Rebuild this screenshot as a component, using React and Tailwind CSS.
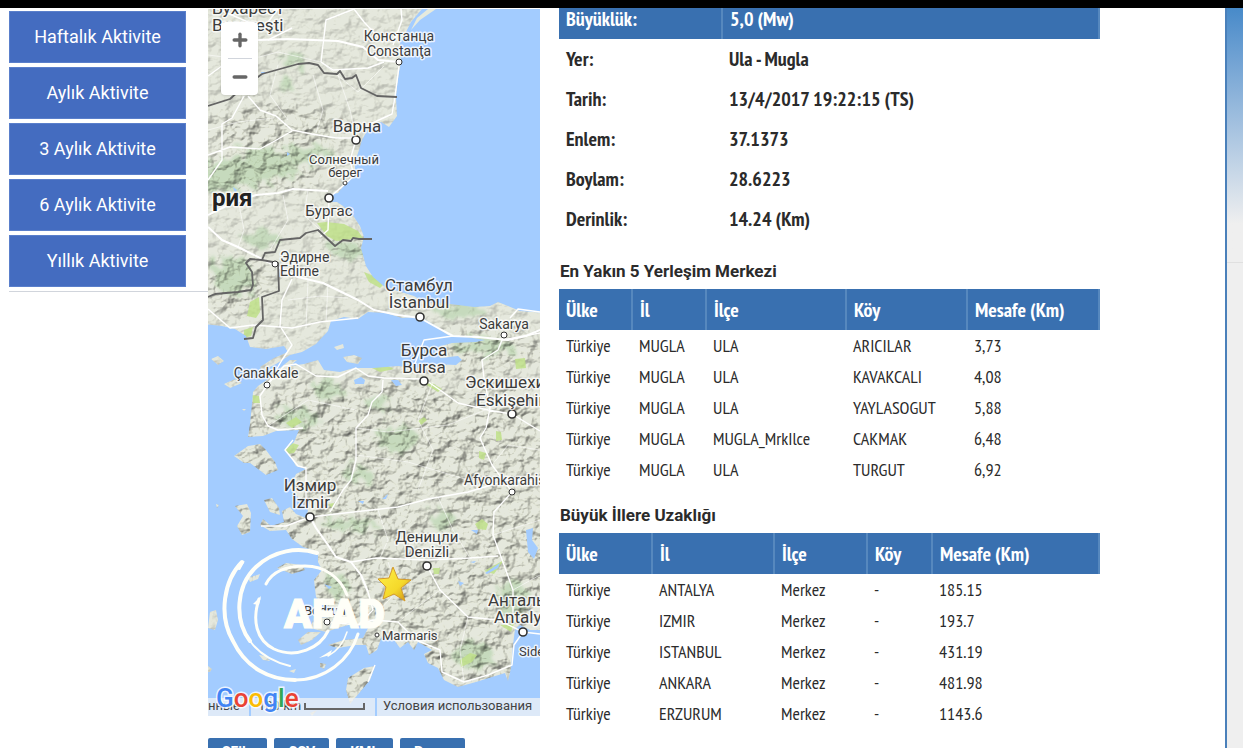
import { Minus, Plus } from 'lucide-react';

const periods = ['Haftalık Aktivite', 'Aylık Aktivite', '3 Aylık Aktivite', '6 Aylık Aktivite', 'Yıllık Aktivite'];

const details = [
    ['Yer:', 'Ula - Mugla'],
    ['Tarih:', '13/4/2017 19:22:15 (TS)'],
    ['Enlem:', '37.1373'],
    ['Boylam:', '28.6223'],
    ['Derinlik:', '14.24 (Km)'],
];

const columns = ['Ülke', 'İl', 'İlçe', 'Köy', 'Mesafe (Km)'];

const settlements = [
    ['Türkiye', 'MUGLA', 'ULA', 'ARICILAR', '3,73'],
    ['Türkiye', 'MUGLA', 'ULA', 'KAVAKCALI', '4,08'],
    ['Türkiye', 'MUGLA', 'ULA', 'YAYLASOGUT', '5,88'],
    ['Türkiye', 'MUGLA', 'MUGLA_MrkIlce', 'CAKMAK', '6,48'],
    ['Türkiye', 'MUGLA', 'ULA', 'TURGUT', '6,92'],
];

const cities = [
    ['Türkiye', 'ANTALYA', 'Merkez', '-', '185.15'],
    ['Türkiye', 'IZMIR', 'Merkez', '-', '193.7'],
    ['Türkiye', 'ISTANBUL', 'Merkez', '-', '431.19'],
    ['Türkiye', 'ANKARA', 'Merkez', '-', '481.98'],
    ['Türkiye', 'ERZURUM', 'Merkez', '-', '1143.6'],
];

const downloads = ['SFile', 'CSV', 'KML', 'Rapor'];

// x, y (baseline), size, anchor, text
const labels = [
    [4, 14, 17, 'start', 'Бухарест'],
    [4, 31, 17, 'start', 'Bucureşti'],
    [191, 41, 14, 'middle', 'Констанца'],
    [191, 56, 14, 'middle', 'Constanţa'],
    [149, 132, 17, 'middle', 'Варна'],
    [136, 164, 13, 'middle', 'Солнечный'],
    [137, 177, 13, 'middle', 'берег'],
    [121, 216, 15, 'middle', 'Бургас'],
    [72, 262, 14, 'start', 'Эдирне'],
    [72, 276, 14, 'start', 'Edirne'],
    [211, 291, 17, 'middle', 'Стамбул'],
    [211, 308, 17, 'middle', 'İstanbul'],
    [296, 329, 14, 'middle', 'Sakarya'],
    [216, 356, 17, 'middle', 'Бурса'],
    [216, 373, 17, 'middle', 'Bursa'],
    [58, 378, 14, 'middle', 'Çanakkale'],
    [257, 388, 17, 'start', 'Эскишехир'],
    [268, 406, 17, 'start', 'Eskişehir'],
    [256, 485, 14, 'start', 'Afyonkarahisar'],
    [102, 491, 17, 'middle', 'Измир'],
    [103, 508, 17, 'middle', 'İzmir'],
    [219, 542, 15, 'middle', 'Деницли'],
    [219, 557, 15, 'middle', 'Denizli'],
    [280, 606, 17, 'start', 'Анталья'],
    [286, 623, 17, 'start', 'Antalya'],
    [96, 615, 13, 'start', 'Bodrum'],
    [174, 640, 13, 'start', 'Marmaris'],
    [311, 656, 13, 'start', 'Side'],
];

// x, y, radius
const cityDots = [
    [191, 62, 3], [148, 140, 4], [137, 183, 2], [121, 198, 4], [67, 264, 3], [212, 317, 4], [296, 335, 3],
    [216, 381, 4], [59, 385, 3], [304, 414, 4], [304, 492, 3], [102, 517, 4], [219, 566, 4], [315, 632, 4],
    [119, 622, 3], [169, 635, 2],
];

// Centre and radii of the hilly and of the wooded areas
const hills = [
    [70, 130, 70, 25], [45, 172, 75, 20], [150, 245, 35, 12], [30, 285, 35, 30], [270, 350, 70, 22],
    [105, 415, 50, 35], [90, 470, 50, 50], [190, 440, 80, 60], [150, 520, 75, 30], [280, 440, 60, 60],
    [290, 530, 60, 60], [160, 585, 70, 40], [240, 620, 60, 60], [25, 460, 40, 70], [150, 670, 40, 40],
    [280, 660, 40, 30], [310, 590, 40, 40], [70, 540, 60, 60],
];
const woods = [
    [40, 170, 50, 13], [15, 180, 30, 12], [100, 155, 30, 9], [85, 60, 12, 8], [78, 85, 8, 7], [25, 275, 20, 20],
    [140, 250, 18, 9], [250, 310, 25, 9], [275, 347, 32, 8], [90, 418, 22, 9], [190, 440, 22, 13], [170, 402, 14, 7],
    [120, 390, 15, 9], [140, 525, 30, 6], [130, 585, 12, 12], [265, 655, 20, 14], [235, 520, 12, 10],
    [55, 240, 18, 8], [305, 600, 15, 20], [150, 475, 14, 9], [52, 155, 20, 8],
];

const mainland = `M-5 0 L214 0 L214 9 L203 22 L198 32 L192 42 L193 62 L191 72 L189 86 L188 97 L189 116 L181 127 L173 122
  L160 129 L154 140 L151 150 L147 162 L147 176 L141 180 L134 188 L130 193 L120 195 L122 202 L129 202 L135 206 L144 214
  L152 226 L156 237 L153 248 L158 266 L165 277 L178 288 L190 291 L206 296 L216 302 L242 304 L266 307 L282 306 L290 302
  L300 306 L312 311 L337 313 L337 630 L322 630 L312 625 L307 629 L305 645 L303 668 L300 681 L297 673 L284 677 L268 682
  L250 687 L236 680 L230 668 L220 663 L216 654 L224 650 L210 642 L206 650 L200 642 L192 648 L186 640 L174 636 L169 650
  L161 655 L158 645 L148 645 L130 648 L120 645 L136 640 L155 638 L160 628 L144 624 L130 628 L118 632 L102 628 L106 618
  L122 617 L132 609 L118 606 L108 597 L106 580 L114 570 L110 562 L110 552 L95 547 L84 539 L78 530 L62 531 L52 525
  L55 519 L63 526 L76 522 L74 511 L82 507 L88 514 L98 518 L100 510 L92 500 L82 488 L88 474 L98 469 L88 466 L82 455
  L77 450 L86 442 L91 430 L68 431 L55 436 L40 437 L42 424 L44 404 L45 392 L50 386 L60 379 L72 368 L82 360 L89 360
  L82 366 L96 364 L110 360 L116 370 L132 372 L146 368 L166 368 L190 366 L208 368 L228 364 L248 365 L254 360
  L250 356 L232 358 L230 347 L244 343 L268 342 L277 340 L258 337 L240 335 L234 331 L226 325 L218 320 L207 317 L194 318
  L178 313 L160 312 L150 319 L136 317 L123 321 L120 331 L108 344 L94 352 L82 355 L68 364 L54 371 L52 367 L66 358
  L80 352 L76 346 L58 349 L42 347 L38 336 L27 329 L14 326 L-5 324 Z`;

const islands = `M3 359 L10 356 L16 361 L10 365 Z M16 384 L27 379 L34 383 L22 388 Z M126 347 L135 344 L136 348 L129 350 Z
  M135 357 L146 355 L154 358 L150 364 L139 362 Z M26 456 L40 446 L52 444 L58 450 L67 462 L70 470 L58 475 L42 463 L36 463 Z
  M27 506 L39 504 L43 513 L42 532 L34 535 L29 526 L35 516 Z M56 500 L64 498 L71 508 L72 515 L62 512 Z
  M69 568 L78 563 L94 565 L97 570 L84 574 Z M40 578 L52 574 L50 579 L42 582 Z M2 612 L8 610 L10 620 L7 630 L0 628 Z
  M90 640 L100 632 L113 632 L104 640 L93 645 Z M138 690 L140 678 L156 668 L167 666 L162 680 L152 692 L142 704 Z
  M51 655 L58 656 L62 661 L55 660 Z M112 663 L118 664 L116 669 L112 667 Z M8 504 L11 505 L9 508 Z M34 409 L38 409 L36 411 Z
  M81 671 L88 669 L86 673 Z M0 666 L4 669 L2 672 L0 672 Z M102 713 L109 710 L104 716 Z`;

const lakes = `M146 380 L153 377 L157 380 L156 384 L147 384 Z M183 380 L190 380 L194 385 L188 386 Z M318 530 L325 528 L324 540
  L330 548 L326 559 L320 552 Z M277 573 L292 563 L290 568 L279 574 Z M116 584 L124 587 L121 589 Z M79 152 L82 154 L79 156 Z
  M263 530 L270 530 L269 534 Z M150 501 L156 501 L155 504 Z M174 499 L180 494 L178 499 Z M250 581 L256 583 L252 586 Z
  M25 187 L29 190 L27 193 Z M262 562 L268 561 L266 563 Z M53 72 L58 72 L54 75 Z`;

const parks = `M109 223 L118 222 L136 224 L150 231 L155 238 L128 241 L119 236 Z M156 272 L166 276 L175 285 L172 288 L161 282 Z
  M42 302 L51 297 L52 312 L48 318 L39 316 Z M36 330 L45 327 L43 336 L36 338 Z M160 366 L178 365 L186 369 L172 372 Z
  M44 395 L51 396 L52 403 L45 403 Z M78 423 L88 417 L94 422 L84 428 Z M78 448 L84 443 L91 445 L86 453 L78 454 Z
  M217 384 L224 383 L234 389 L230 392 Z M307 359 L317 358 L318 368 L308 369 Z M288 431 L293 432 L294 440 L288 441 Z
  M271 451 L278 453 L276 460 L271 458 Z M267 524 L274 519 L280 524 L278 530 L270 529 Z M98 573 L110 572 L108 576 L98 577 Z
  M252 660 L262 653 L269 655 L264 662 L253 667 Z M225 568 L232 568 L231 574 L226 574 Z M292 625 L306 624 L303 632 Z
  M210 421 L216 417 L219 420 L213 425 Z M276 571 L296 560 L286 574 Z M120 504 L126 503 L124 508 Z`;

const borders = `M0 106 L22 99 L32 90 L54 74 L90 64 L101 63 L110 65 L116 73 L129 74 L132 71 L137 79 L144 78 L148 75 L153 88
  L169 96 L189 97 M164 239 L151 239 L145 238 L143 241 L135 240 L127 246 L110 230 L98 233 L92 238 L72 240 L67 252
  L57 253 L54 260 L70 263 L71 291 L54 297 L55 320 L48 327 L45 338 L36 339
  M54 260 L42 259 L38 263 L44 272 L45 285 L43 290 L30 292 L18 293 L7 294 L0 297`;

const motorways = `M0 215 L20 205 L48 195 L70 193 L85 189 L120 191 M0 227 L14 240 L30 247 L54 259 L72 268 L90 277 L115 283
  L150 300 L166 310 L190 315 L212 318 L230 328 L245 336 L270 337 L300 340 L318 336 L332 330
  M50 40 L80 39 L130 41 L155 47 L170 60 L191 62 M102 517 L108 528 L120 545 L128 557 L143 562 L153 575 L160 592`;

const roads = `M40 96 L52 110 L68 116 L84 130 L104 134 L128 138 L148 138 M0 155 L22 147 L52 149 L65 142 L84 131 M148 140
  L142 160 L146 176 L137 184 L121 198 L120 230 L112 237 M191 66 L187 97 L184 114 L160 125 M146 9 L118 20 L113 62
  M70 9 L60 22 L45 32 M84 28 L60 40 M113 62 L125 70 L160 68 L176 62 M146 9 L156 22 L175 42 M193 9 L194 20 L185 45
  M10 9 L40 22 M36 50 L0 76 M36 96 L24 118 L14 124 L14 160 L0 180 M84 279 L74 300 L72 326 L84 345 L74 360 L60 384
  L52 396 L54 415 L60 426 L70 430 L95 428 M0 309 L22 328 L45 325 L84 328 L112 322 L150 318 M60 384 L76 366 L88 364
  L108 376 L130 377 L148 368 L160 376 L176 378 L216 379 L232 390 L250 403 L280 410 L304 414 L332 431
  M175 380 L174 392 L164 402 L160 415 L148 428 L148 460 L143 480 L135 490 L122 512 M102 517 L128 514 L190 507
  L220 499 L260 492 L300 480 L332 482 M53 526 L78 526 L102 517 M85 440 L77 450 L90 466 L98 468 L98 500
  M143 562 L168 558 L219 560 L262 558 L290 556 M219 566 L232 590 L260 617 L290 620 L315 632 L332 634
  M296 335 L290 350 L274 360 L276 378 L282 408 L278 428 L272 438 L284 465 L304 492 M304 492 L286 512 L285 535 L296 565
  L305 590 L305 620 M315 632 L306 645 L304 665 L280 675 L256 682 L234 672 L232 650 L208 640 L190 622 L165 620 L150 625
  M160 592 L165 610 L150 625 L119 622 M206 366 L216 340 L245 336 M294 340 L332 333 M167 665 L160 682
  M332 312 L310 309 L302 318`;

const minorRoads = `M0 55 L40 60 L70 52 L113 62 L150 92 L176 66 M70 65 L62 95 L80 120 M105 75 L115 110 L108 133 M130 75
  L142 110 L148 138 M0 130 L30 122 L66 118 M30 200 L36 230 L30 247 M75 195 L80 220 L62 250 M100 190 L96 215 L112 230
  M80 300 L112 296 L140 298 M120 284 L118 322 M100 280 L98 328 M225 382 L210 420 L225 450 L210 490 M148 428 L180 432
  L240 425 L282 408 M148 455 L200 462 L260 480 M60 426 L100 400 L148 410 M170 510 L180 540 L172 558 M230 497 L245 530
  L262 558 M332 520 L300 530 L285 535 M180 562 L190 590 L170 612 M232 590 L205 610 L190 622 M305 590 L332 575
  M260 617 L252 650 L256 682 M332 450 L300 445 L284 465`;

function Blobs({ items, ...rest }) {
    return (
        <g {...rest}>
            {items.map(([cx, cy, rx, ry]) => (
                <ellipse key={`${cx}-${cy}`} cx={cx} cy={cy} rx={rx} ry={ry} />
            ))}
        </g>
    );
}

function MapDrawing() {
    return (
        <svg viewBox="0 9 332 707" className="block w-full font-[Roboto,sans-serif]" role="img" aria-label="Deprem haritası">
            <defs>
                <clipPath id="land">
                    <path d={mainland} />
                    <path d={islands} />
                </clipPath>
                <filter id="soft" x="-20%" y="-20%" width="140%" height="140%">
                    <feGaussianBlur stdDeviation="7" />
                </filter>
                <filter id="patchy" x="-10%" y="-10%" width="120%" height="120%">
                    <feTurbulence type="fractalNoise" baseFrequency="0.12" numOctaves="3" seed="4" result="noise" />
                    <feDisplacementMap in="SourceGraphic" in2="noise" scale="26" />
                    <feGaussianBlur stdDeviation="1.5" />
                </filter>
                <filter id="relief" x="0" y="0" width="100%" height="100%" colorInterpolationFilters="sRGB">
                    <feTurbulence type="fractalNoise" baseFrequency="0.07 0.09" numOctaves="4" seed="12" />
                    <feColorMatrix values="0 0 0 0 0  0 0 0 0 0  0 0 0 0 0  1 0 0 0 0" />
                    <feDiffuseLighting surfaceScale="5" diffuseConstant="1.2" lightingColor="#f6f6f0">
                        <feDistantLight azimuth="225" elevation="60" />
                    </feDiffuseLighting>
                </filter>
                <mask id="hillMask">
                    <rect y="0" width="332" height="720" fill="#444" />
                    <Blobs items={hills} fill="#b0b0b0" filter="url(#soft)" />
                </mask>
                <linearGradient id="gold" x1="0" y1="0" x2="1" y2="1">
                    <stop offset="0" stopColor="#fff04a" />
                    <stop offset="0.6" stopColor="#f5d92a" />
                    <stop offset="1" stopColor="#c98a12" />
                </linearGradient>
            </defs>

            <rect y="0" width="332" height="720" fill="#a3ccff" />
            <path d="M220 9 L209 18 L203 30 L212 20 L228 9 Z" fill="#e6eade" />
            <g clipPath="url(#land)">
                <rect y="0" width="332" height="720" fill="#e5e8dd" />
                <Blobs items={woods} fill="#bcd6b3" opacity="0.75" filter="url(#patchy)" />
                <g mask="url(#hillMask)" className="mix-blend-multiply">
                    <rect y="0" width="332" height="720" filter="url(#relief)" />
                </g>
                <path d={parks} fill="#bfe08a" opacity="0.85" />
                <path d={lakes} fill="#a3ccff" />
                <path d={minorRoads} fill="none" stroke="#fff" strokeOpacity="0.7" strokeWidth="0.8" />
            </g>
            <path d={roads} fill="none" stroke="#fff" strokeWidth="1.4" strokeLinejoin="round" />
            <path d={motorways} fill="none" stroke="#fff" strokeWidth="2" strokeLinejoin="round" />
            <path d={borders} fill="none" stroke="#646464" strokeWidth="1.8" strokeLinejoin="round" />

            {cityDots.map(([cx, cy, r]) => (
                <circle key={`${cx}-${cy}`} cx={cx} cy={cy} r={r} fill="#fff" stroke="#333" strokeWidth={r > 3 ? 1.6 : 1} />
            ))}
            <g fill="#3c3c3c" stroke="#fff" strokeOpacity="0.75" strokeWidth="3" strokeLinejoin="round" paintOrder="stroke">
                {labels.map(([x, y, size, anchor, text]) => (
                    <text key={text} x={x} y={y} fontSize={size} textAnchor={anchor}>{text}</text>
                ))}
                <text x="4" y="206" fontSize="24" fontWeight="700" fill="#222">рия</text>
            </g>

            {/* AFAD mark */}
            <g fill="none" stroke="#fffff8" strokeLinecap="round">
                <path d="M109 553 C90 547 66 550 48 567 C28 586 26 620 42 641" strokeWidth="4" />
                <path d="M42 641 C52 655 66 662 82 666" strokeWidth="2" />
                <path d="M34 562 C16 580 10 615 25 641 C38 668 62 680 87 680" strokeWidth="4" />
                <path d="M87 680 C117 680 142 660 150 634" strokeWidth="3" />
                <path d="M58 584 C66 568 84 566 97 566 C117 566 133 578 139 595" strokeWidth="3" />
                <path d="M51 599 C44 620 48 640 66 649 C88 659 112 648 120 631" strokeWidth="3" />
                <path d="M120 656 C131 650 136 642 139 632" strokeWidth="1.5" />
            </g>
            <path d="M37 561 L26 569 L32 570 Z M53 596 L45 604 L51 605 Z M111 658 L124 650 L122 655 Z" fill="#fffff8" />
            <text x="76" y="628" fontSize="41" fontWeight="900" fill="#fffff8" stroke="#fffff8" strokeWidth="1">AFAD</text>

            <path d="M185 567 L190 579 L203 580 L193 588 L197 601 L186 594 L175 599 L178 587 L170 579 L181 578 Z" fill="url(#gold)" stroke="#d59b2c" strokeLinejoin="round" />

            {/* Attribution strip */}
            <rect y="698" width="332" height="18" fill="#f5f5f5" fillOpacity="0.7" />
            <path d="M42 698 V716 M168 698 V716" stroke="#a3ccff" strokeWidth="2" />
            <g fontSize="13" fill="#444">
                <text x="32" y="710" textAnchor="end">Данные</text>
                <text x="50" y="710">100 km</text>
                <text x="175" y="710">Условия использования</text>
            </g>
            <path d="M97 703 V709 H156 V703" fill="none" stroke="#666" strokeWidth="2" />
            <text x="8" y="707" fontSize="26" fontWeight="500" stroke="#fff" strokeOpacity="0.8" strokeWidth="3" paintOrder="stroke">
                <tspan fill="#4285f4">G</tspan>
                <tspan fill="#ea4335">o</tspan>
                <tspan fill="#fbbc05">o</tspan>
                <tspan fill="#4285f4">g</tspan>
                <tspan fill="#34a853">l</tspan>
                <tspan fill="#ea4335">e</tspan>
            </text>
        </svg>
    );
}

function DistanceTable({ title, widths, rows }) {
    return (
        <section>
            <h2 className="h-6 pl-px text-[17px] leading-6 font-bold font-[Roboto,sans-serif]">{title}</h2>
            <table className="mt-[6px] w-full table-fixed border-collapse text-left text-lg leading-6">
                <colgroup>
                    {widths.map((width, i) => <col key={columns[i]} className={width} />)}
                </colgroup>
                <thead>
                    <tr className="h-[41px] bg-[#3970b0] text-xl leading-6 text-white">
                        {columns.map((column) => (
                            <th key={column} className="border-r-2 border-[#5688be] px-[7px] font-bold">{column}</th>
                        ))}
                    </tr>
                </thead>
                <tbody>
                    {rows.map((row) => (
                        <tr key={row.join()} className="h-[31px]">
                            {row.map((cell, i) => <td key={columns[i]} className="px-[7px]">{cell}</td>)}
                        </tr>
                    ))}
                </tbody>
            </table>
        </section>
    );
}

export default function App() {
    return (
        <div className="flex h-screen flex-col overflow-hidden bg-white text-[#2b2b2b] font-['PT_Sans_Narrow','Liberation_Sans_Narrow','Liberation_Sans',sans-serif]">
            <header className="relative z-10 h-2 shrink-0 bg-black" />

            <div className="flex min-h-0 flex-1">
                <div className="flex min-w-0 flex-1">
                    {/* Activity menu */}
                    <nav className="w-[208px] shrink-0 pt-[3px] pl-[9px] font-[Roboto,sans-serif]">
                        <div className="flex flex-col gap-1 border-b border-gray-300 pb-1">
                            {periods.map((period) => (
                                <button key={period} type="button" className="mr-[22px] h-[52px] border border-[#5a7fcb] bg-[#446cc0] text-lg text-white">
                                    {period}
                                </button>
                            ))}
                        </div>
                    </nav>

                    {/* Map and downloads */}
                    <div className="w-[332px] shrink-0 pt-px">
                        <div className="relative">
                            <MapDrawing />
                            <div className="absolute top-[13px] left-[13px] flex w-[37px] flex-col items-center rounded-sm bg-white text-[#666] shadow">
                                <button type="button" aria-label="Yakınlaştır" className="flex h-9 w-full items-center justify-center">
                                    <Plus size={20} strokeWidth={4} />
                                </button>
                                <span className="h-px w-6 bg-gray-300" />
                                <button type="button" aria-label="Uzaklaştır" className="flex h-9 w-full items-center justify-center">
                                    <Minus size={20} strokeWidth={4} />
                                </button>
                            </div>
                        </div>
                        <div className="mt-[22px] flex gap-[7px] font-[Roboto,sans-serif]">
                            {downloads.map((name) => (
                                <button key={name} type="button" className="h-7 rounded-xs bg-[#3970b0] px-[14px] text-sm font-bold text-white">
                                    {name}
                                </button>
                            ))}
                        </div>
                    </div>

                    {/* Earthquake details */}
                    <main className="-mt-[10px] ml-[19px] w-full max-w-[541px] min-w-0">
                        <table className="w-full table-fixed border-collapse text-left text-xl leading-6 font-bold">
                            <colgroup>
                                <col className="w-[163px]" />
                                <col />
                            </colgroup>
                            <thead>
                                <tr className="h-[41px] bg-[#3970b0] text-white">
                                    <th className="border-r-2 border-[#5688be] px-[7px]">Büyüklük:</th>
                                    <th className="border-r-2 border-[#5688be] px-[7px]">5,0 (Mw)</th>
                                </tr>
                            </thead>
                            <tbody>
                                {details.map(([name, value]) => (
                                    <tr key={name} className="h-10">
                                        <th className="px-[7px]">{name}</th>
                                        <td className="px-[7px]">{value}</td>
                                    </tr>
                                ))}
                            </tbody>
                        </table>
                        <div className="mt-5 flex flex-col gap-[18px]">
                            <DistanceTable
                                title="En Yakın 5 Yerleşim Merkezi"
                                widths={['w-[73px]', 'w-[74px]', 'w-[140px]', 'w-[121px]', 'w-auto']}
                                rows={settlements}
                            />
                            <DistanceTable
                                title="Büyük İllere Uzaklığı"
                                widths={['w-[93px]', 'w-[122px]', 'w-[93px]', 'w-[65px]', 'w-auto']}
                                rows={cities}
                            />
                        </div>
                    </main>
                </div>

                <aside className="w-[18px] shrink-0 border-l-2 border-[#4a80ba] bg-[#efefef]">
                    <div className="h-[255px] border-b border-[#e0e0e0] bg-linear-to-b from-[#478ac9] to-[#efefef] to-85%" />
                </aside>
            </div>
        </div>
    );
}
